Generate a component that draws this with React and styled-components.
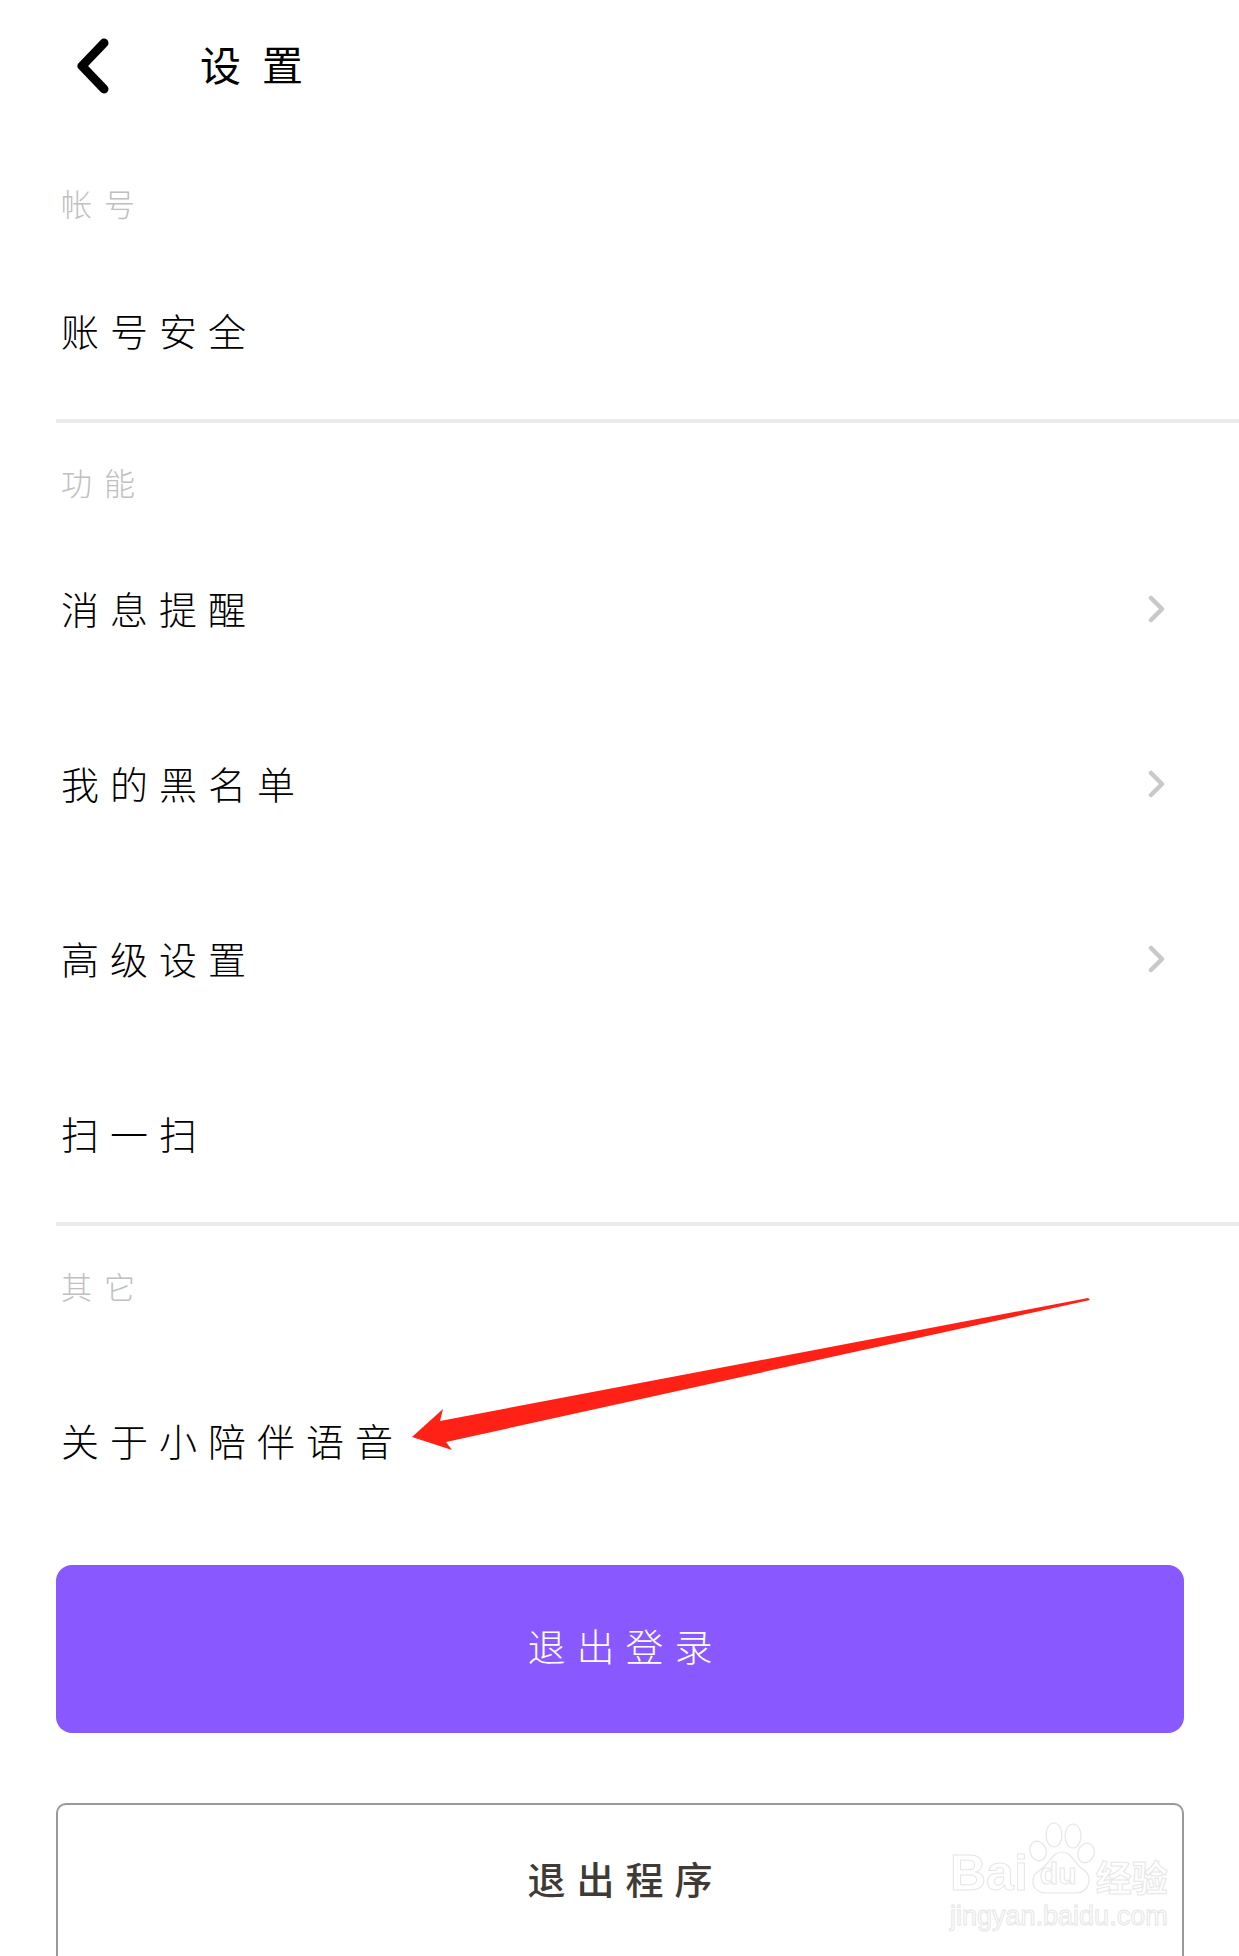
import React from "react";
import styled, { createGlobalStyle } from "styled-components";

const Global = createGlobalStyle`
  html, body {
    margin: 0;
    padding: 0;
    background: #fff;
  }
  * {
    box-sizing: border-box;
  }
`;

const Page = styled.div`
  position: relative;
  width: 1239px;
  height: 1956px;
  overflow: hidden;
  padding-left: 56px;
  background: #fff;
  color: #000;
  font-family: "Noto Sans CJK SC", "Noto Sans", sans-serif;
  font-weight: 300;
`;

const Header = styled.header`
  display: flex;
  align-items: center;
  height: 132px;
  padding-left: 21px;
`;

const BackIcon = styled.svg`
  width: 36px;
  height: 60px;
  flex: none;
`;

const Title = styled.h1`
  margin: 0 0 6px 87px;
  font-size: 41px;
  line-height: 60px;
  font-weight: 400;
  letter-spacing: 21px;
`;

const Section = styled.section`
  padding-top: ${(p) => p.$top}px;
  padding-bottom: ${(p) => (p.$divider ? 2 : 0)}px;
  border-bottom: ${(p) => (p.$divider ? "4px solid #ebebeb" : "none")};
`;

const Label = styled.div`
  height: 38px;
  margin-bottom: ${(p) => p.$gap}px;
  padding-left: 5px;
  font-size: 31px;
  line-height: 38px;
  letter-spacing: 12px;
  color: #c0c0c0;
`;

const Row = styled.div`
  display: flex;
  align-items: center;
  justify-content: space-between;
  height: 175px;
  padding: 0 74px 0 5px;
`;

const RowText = styled.span`
  font-size: 38px;
  letter-spacing: 11px;
  white-space: nowrap;
`;

const Chevron = styled.svg`
  width: 18px;
  height: 30px;
  margin-top: 3px;
`;

const Actions = styled.div`
  display: flex;
  flex-direction: column;
  gap: 70px;
  width: 1128px;
  margin-top: 38px;
`;

const Button = styled.button`
  flex: none;
  height: 168px;
  padding: ${(p) => (p.$primary ? "0 0 10px 11px" : "0 0 20px 11px")};
  border-radius: ${(p) => (p.$primary ? "16px" : "10px")};
  border: ${(p) => (p.$primary ? "none" : "2px solid #999")};
  background: ${(p) => (p.$primary ? "#8959ff" : "#fff")};
  color: ${(p) => (p.$primary ? "#fff" : "#3f3a36")};
  font-family: inherit;
  font-size: 38px;
  font-weight: ${(p) => (p.$primary ? 300 : 500)};
  letter-spacing: 11px;
`;

const Arrow = styled.svg`
  position: absolute;
  left: 400px;
  top: 1290px;
  width: 700px;
  height: 170px;
`;

const Watermark = styled.div`
  position: absolute;
  left: 950px;
  top: 1820px;
  width: 226px;
  color: #fff;
  -webkit-text-stroke: 1px #e6e6e6;
  font-family: "Liberation Sans", sans-serif;
`;

const MarkTop = styled.div`
  display: flex;
  align-items: flex-end;
  height: 74px;
`;

const MarkBai = styled.span`
  font-size: 50px;
  line-height: 50px;
  font-weight: 700;
  margin-bottom: -4px;
`;

const Paw = styled.div`
  position: relative;
  width: 68px;
  height: 72px;
  flex: none;
`;

const PawIcon = styled.svg`
  width: 68px;
  height: 72px;
`;

const MarkDu = styled.span`
  position: absolute;
  left: 12px;
  bottom: 5px;
  font-size: 30px;
  line-height: 30px;
  font-weight: 700;
`;

const MarkCn = styled.span`
  font-family: "Noto Sans CJK SC", sans-serif;
  font-size: 36px;
  line-height: 40px;
  font-weight: 700;
  margin-bottom: -2px;
`;

const MarkUrl = styled.div`
  margin-top: 6px;
  font-size: 27px;
  line-height: 32px;
  white-space: nowrap;
`;

const MenuRow = ({ text, more }) => (
  <Row>
    <RowText>{text}</RowText>
    {more && (
      <Chevron viewBox="0 0 18 30" fill="none">
        <path d="M4 4 L15 15 L4 26" stroke="#c9c9c9" strokeWidth="4.5" strokeLinecap="round" strokeLinejoin="round" />
      </Chevron>
    )}
  </Row>
);

export default function App() {
  return (
    <Page>
      <Global />
      <Header>
        <BackIcon viewBox="0 0 36 60" fill="none">
          <path d="M27 7 L5 30 L27 53" stroke="#000" strokeWidth="9" strokeLinecap="round" strokeLinejoin="round" />
        </BackIcon>
        <Title>设置</Title>
      </Header>

      <Section $top={52} $divider>
        <Label $gap={20}>帐号</Label>
        <Row>
          <RowText>账号安全</RowText>
        </Row>
      </Section>

      <Section $top={40} $divider>
        <Label $gap={19}>功能</Label>
        <MenuRow text="消息提醒" more />
        <MenuRow text="我的黑名单" more />
        <MenuRow text="高级设置" more />
        <MenuRow text="扫一扫" />
      </Section>

      <Section $top={41}>
        <Label $gap={47}>其它</Label>
        <MenuRow text="关于小陪伴语音" />
      </Section>

      <Actions>
        <Button $primary>退出登录</Button>
        <Button>退出程序</Button>
      </Actions>

      {/* red callout pointing at the about row */}
      <Arrow viewBox="0 0 700 170">
        <path d="M12 147 L43 119 L40 131 L688 8 L690 10 L46 152 L52 160 Z" fill="#ff2116" />
      </Arrow>

      <Watermark>
        <MarkTop>
          <MarkBai>Bai</MarkBai>
          <Paw>
            <PawIcon viewBox="0 0 68 72" fill="#fff" stroke="#e6e6e6" strokeWidth="1.2">
              <ellipse cx="10" cy="29" rx="8" ry="10" transform="rotate(-20 10 29)" />
              <ellipse cx="26" cy="13" rx="8" ry="12" />
              <ellipse cx="45" cy="14" rx="8" ry="12" />
              <ellipse cx="58" cy="31" rx="8" ry="10" transform="rotate(20 58 31)" />
              <path d="M34 30 C44 30 46 42 56 48 C66 56 60 71 48 71 L18 71 C4 71 0 56 12 48 C22 42 24 30 34 30 Z" />
            </PawIcon>
            <MarkDu>du</MarkDu>
          </Paw>
          <MarkCn>经验</MarkCn>
        </MarkTop>
        <MarkUrl>jingyan.baidu.com</MarkUrl>
      </Watermark>
    </Page>
  );
}
